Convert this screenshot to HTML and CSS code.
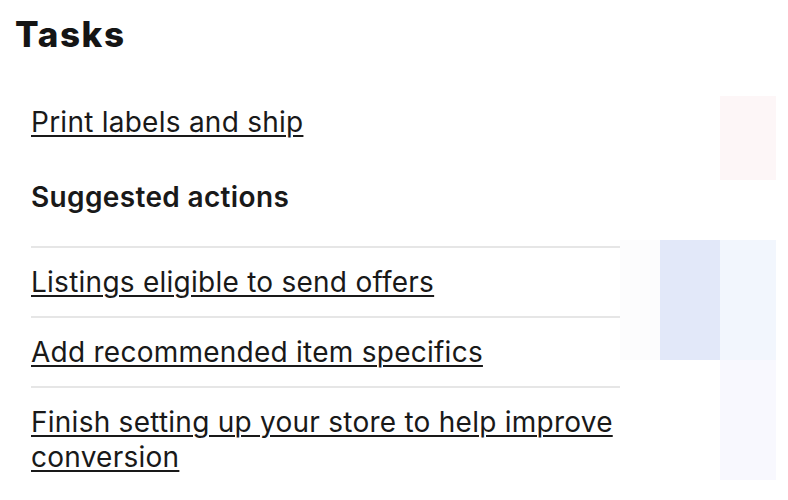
FILE: index.html
```html
<!DOCTYPE html>
<html lang="en">
<head>
<meta charset="utf-8">
<title>Tasks</title>
<link rel="stylesheet" href="styles.css">
</head>
<body>
<div class="page">
  <main class="tasks">
    <h1 class="tasks-title">Tasks</h1>
    <div class="tasks-body">
      <a class="task-link primary" href="#">Print labels and ship</a>
      <h2 class="section-title">Suggested actions</h2>
      <ul class="action-list">
        <li class="action-item"><a class="task-link" href="#">Listings eligible to send offers</a></li>
        <li class="action-item"><a class="task-link" href="#">Add recommended item specifics</a></li>
        <li class="action-item"><a class="task-link" href="#">Finish setting up your store to help improve conversion</a></li>
      </ul>
    </div>
  </main>
  <aside class="deco" aria-hidden="true">
    <div class="tile t-pink"></div>
    <div class="tile t-blue"></div>
    <div class="tile t-lightblue"></div>
    <div class="tile t-faint"></div>
    <div class="tile t-ghost"></div>
  </aside>
</div>
</body>
</html>
```
FILE: styles.css
```css
html, body {
  margin: 0;
  padding: 0;
  background: #ffffff;
}

body {
  font-family: Inter, "Liberation Sans", Arial, sans-serif;
  color: #191919;
}

.page {
  display: flex;
  width: 788px;
  height: 500px;
  overflow: hidden;
}

.tasks {
  width: 605px;
  padding-left: 15px;
  flex: none;
}

.tasks-title {
  margin: 0;
  padding-top: 14px;
  font-size: 35px;
  line-height: 40px;
  font-weight: 800;
  letter-spacing: 1.6px;
  color: #151515;
}

.tasks-body {
  padding-left: 16px;
  padding-top: 51px;
}

.task-link {
  color: #191919;
  text-decoration: underline;
  text-underline-offset: 3px;
  text-decoration-thickness: 2px;
  font-size: 28px;
  line-height: 35px;
  letter-spacing: 0.25px;
}

.primary {
  display: inline-block;
}

.section-title {
  margin: 0;
  padding-top: 40px;
  padding-bottom: 31px;
  font-size: 28px;
  line-height: 35px;
  font-weight: 600;
  letter-spacing: 0.35px;
}

.action-list {
  list-style: none;
  margin: 0;
  padding: 0;
}

.action-item {
  border-top: 2px solid #e6e6e6;
  padding: 17px 0 16px;
}

.deco {
  flex: 1;
  display: grid;
  grid-template-columns: 40px 60px 56px 12px;
  grid-template-rows: 96px 84px 60px 120px 120px;
}

.tile {
  background: transparent;
}

.t-pink {
  grid-column: 3;
  grid-row: 2;
  background: #fdf6f7;
}

.t-blue {
  grid-column: 2;
  grid-row: 4;
  background: #e2e8f9;
}

.t-lightblue {
  grid-column: 3;
  grid-row: 4;
  background: #f2f6fd;
}

.t-faint {
  grid-column: 3;
  grid-row: 5;
  background: #f8f8fe;
}

.t-ghost {
  grid-column: 1;
  grid-row: 4;
  background: #fcfcfd;
}
```
